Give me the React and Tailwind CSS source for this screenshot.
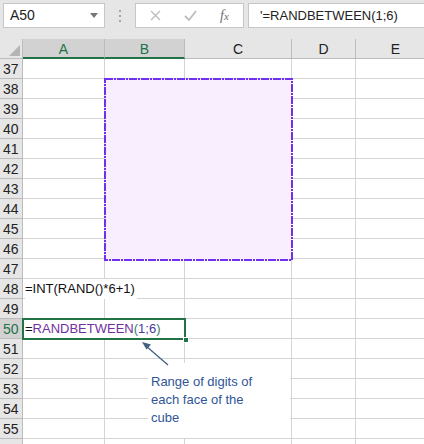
import React from "react";

// column widths (incl. right grid line)
const COLS = [
  { key: "A", w: 82, sel: true },
  { key: "B", w: 80, sel: true },
  { key: "C", w: 107 },
  { key: "D", w: 64 },
  { key: "E", w: 80 },
];

const ROWS = [37, 38, 39, 40, 41, 42, 43, 44, 45, 46, 47, 48, 49, 50, 51, 52, 53, 54, 55, 56];

const FONT = { fontFamily: '"Liberation Sans", Arial, sans-serif' };

const Toolbar = () => (
  <div className="h-[39px] bg-[#e6e6e6] relative flex items-start pt-[3px]">
    {/* name box */}
    <div className="ml-[3px] w-[102px] h-[25px] bg-white border border-[#c6c6c6] flex items-center justify-between pl-[6px] pr-[6px]">
      <span className="text-[14px] text-[#222]">A50</span>
      <svg width="8" height="5" viewBox="0 0 8 5">
        <path d="M0 0h8L4 5z" fill="#777" />
      </svg>
    </div>
    {/* grip dots */}
    <div className="w-[30px] h-[25px] flex flex-col items-center justify-center gap-[3px]">
      <span className="w-[2px] h-[2px] bg-[#a6a6a6]" />
      <span className="w-[2px] h-[2px] bg-[#a6a6a6]" />
      <span className="w-[2px] h-[2px] bg-[#a6a6a6]" />
    </div>
    {/* cancel / enter / fx */}
    <div className="w-[109px] h-[25px] bg-white border border-[#c6c6c6] flex items-center">
      <svg className="ml-[14px]" width="11" height="11" viewBox="0 0 11 11">
        <path d="M1 1l9 9M10 1l-9 9" stroke="#bdbdbd" strokeWidth="1.4" fill="none" />
      </svg>
      <svg className="ml-[23px]" width="13" height="11" viewBox="0 0 13 11">
        <path d="M1 6l4 4 7-9" stroke="#bdbdbd" strokeWidth="1.8" fill="none" />
      </svg>
      <span
        className="ml-[23px] text-[14px] italic text-[#6e6e6e] leading-none"
        style={{ fontFamily: '"Liberation Serif", serif' }}
      >
        f<span className="text-[11px]">x</span>
      </span>
    </div>
    {/* formula input */}
    <div className="ml-[4px] flex-1 h-[25px] bg-white border border-[#c6c6c6] border-r-0 flex items-center pl-[11px]">
      <span className="text-[13px] text-[#222]">'=RANDBETWEEN(1;6)</span>
    </div>
  </div>
);

const HeaderRow = () => (
  <div className="flex h-[20px]">
    <div className="w-[23px] shrink-0 bg-[#e6e6e6] border-r border-b border-[#bcbcbc] relative">
      <svg className="absolute right-[2px] bottom-[2px]" width="11" height="11" viewBox="0 0 11 11">
        <path d="M11 0v11H0z" fill="#b4b4b4" />
      </svg>
    </div>
    {COLS.map((c) => (
      <div
        key={c.key}
        style={{ width: c.w }}
        className={
          c.sel
            ? "shrink-0 bg-[#d2d2d2] border-r border-[#bcbcbc] border-b-2 border-b-[#217346] text-[#217346] text-[14px] flex items-center justify-center pt-[2px]"
            : "shrink-0 bg-[#e6e6e6] border-r border-b border-[#bcbcbc] text-[#222] text-[14px] flex items-center justify-center pt-[1px]"
        }
      >
        {c.key}
      </div>
    ))}
  </div>
);

const CellText = ({ row }) => {
  if (row === 48) {
    return (
      <span className="relative z-[2] bg-white pr-[2px] text-[13px] text-[#111] whitespace-nowrap">
        =INT(RAND()*6+1)
      </span>
    );
  }
  if (row === 50) {
    return (
      <span className="relative z-[2] bg-white pr-[2px] text-[13px] whitespace-nowrap">
        <span className="text-[#111]">=</span>
        <span className="text-[#7030a0]">RANDBETWEEN</span>
        <span className="text-[#3b7b6c]">(</span>
        <span className="text-[#4a3a9c]">1;6</span>
        <span className="text-[#3b7b6c]">)</span>
      </span>
    );
  }
  return null;
};

const Row = ({ n }) => {
  const sel = n === 50;
  return (
    <div className="flex h-[20px]">
      <div
        className={
          sel
            ? "w-[23px] shrink-0 bg-[#d2d2d2] border-r border-b border-[#bcbcbc] text-[#217346] text-[14px] flex items-center pl-[3px] pt-[1px]"
            : "w-[23px] shrink-0 bg-[#e6e6e6] border-r border-b border-[#bcbcbc] text-[#222] text-[14px] flex items-center pl-[3px] pt-[1px]"
        }
      >
        {n < 56 ? n : ""}
      </div>
      {COLS.map((c, i) => (
        <div
          key={c.key}
          style={{ width: c.w }}
          className="shrink-0 border-r border-b border-[#d4d4d4] flex items-center pl-[2px] pt-[1px]"
        >
          {i === 0 && <CellText row={n} />}
        </div>
      ))}
    </div>
  );
};

export default function App() {
  return (
    <div className="w-[424px] h-[444px] overflow-hidden bg-white relative" style={FONT}>
      <Toolbar />
      <HeaderRow />
      {ROWS.map((n) => (
        <Row key={n} n={n} />
      ))}

      {/* shape */}
      <svg className="absolute left-[104px] top-[78px] z-[5]" width="189" height="183" viewBox="0 0 189 183">
        <rect x="1" y="1" width="187" height="181" fill="#f8eefd" stroke="#7030f0" strokeWidth="2" strokeDasharray="8 1 2 1" />
      </svg>

      {/* selection */}
      <div className="absolute left-[22px] top-[318px] w-[164px] h-[22px] border-2 border-[#217346] z-[6]" />
      <div className="absolute left-[183px] top-[337px] w-[6px] h-[6px] bg-[#217346] border border-white z-[7]" />

      {/* annotation text box */}
      <div className="absolute left-[148px] top-[363px] w-[142px] h-[75px] bg-white z-[6] pl-[3px] pt-[10px] text-[13px] leading-[18px] text-[#2f5597]">
        Range of digits of
        <br />
        each face of the
        <br />
        cube
      </div>

      {/* arrow */}
      <svg className="absolute left-[138px] top-[338px] z-[7]" width="36" height="32" viewBox="0 0 36 32">
        <path d="M30 27L8 8" stroke="#44607f" strokeWidth="1.3" fill="none" />
        <path d="M4 4l9 2.5-4.5 5z" fill="#44607f" />
      </svg>
    </div>
  );
}
